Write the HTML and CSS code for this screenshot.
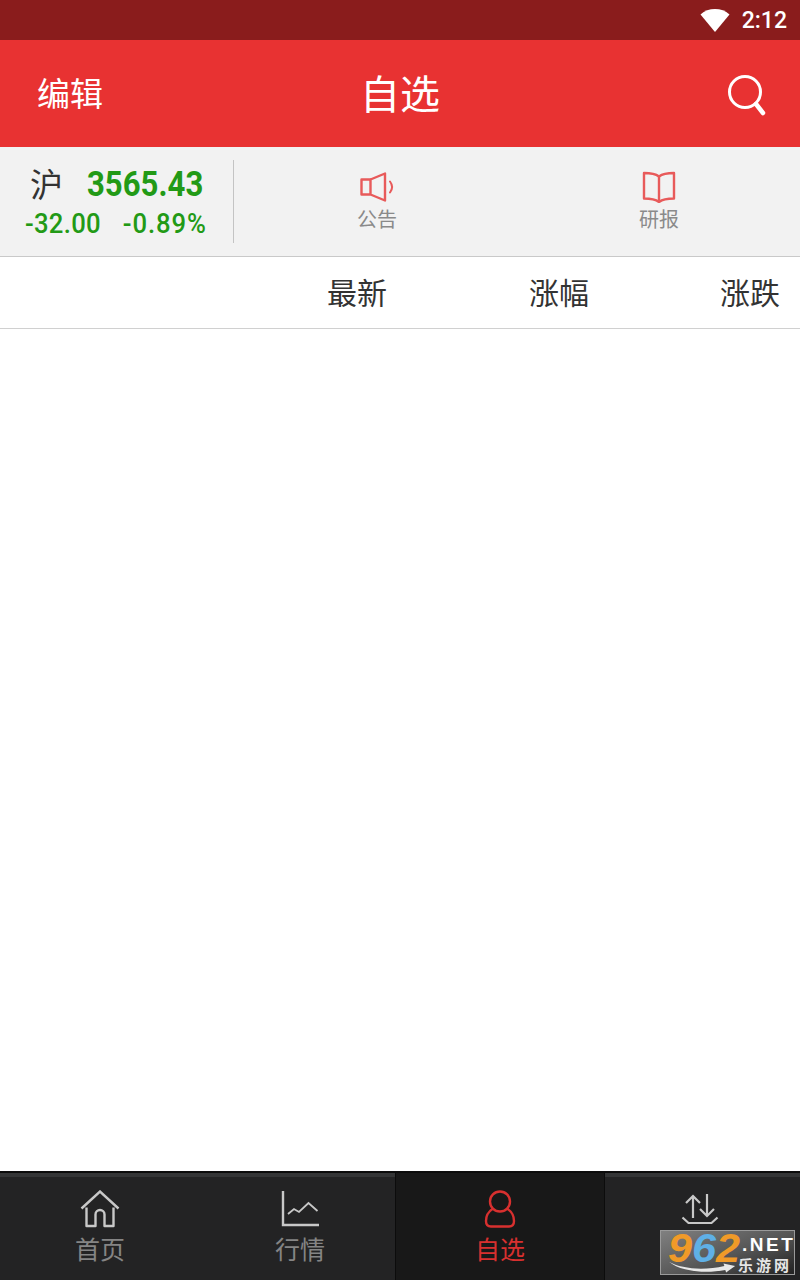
FILE: index.html
```html
<!DOCTYPE html>
<html lang="zh">
<head>
    <title>自选</title>
    <meta charset="UTF-8">
    <link rel="stylesheet" href="styles.css">
</head>
<body>
    <div class="app">
        <div class="statusbar">
            <svg class="wifi" width="30" height="24" viewBox="0 0 30 24"><path d="M0.5 6.5C4.500 2.800 9.500 1 15 1s10.500 1.800 14.500 5.500L15 24z" fill="#fff"/></svg>
            <span class="clock">2:12</span>
        </div>
        <div class="header">
            <span class="edit">编辑</span>
            <span class="title">自选</span>
            <svg class="search" width="42" height="42" viewBox="0 0 42 42" fill="none" stroke="#fff" stroke-linecap="round"><circle cx="19" cy="18" r="15.500" stroke-width="3"/><path d="M30 30l7 9" stroke-width="4.500"/></svg>
        </div>
        <div class="subbar">
            <div class="index">
                <div class="index-top"><span class="market">沪</span><span class="price">3565.43</span></div>
                <div class="index-bottom"><span>-32.00</span><span class="index-pct">-0.89%</span></div>
            </div>
            <div class="shortcuts">
                <div class="shortcut">
                    <svg width="36" height="30" viewBox="0 0 36 30" fill="none" stroke="#e85a5a" stroke-width="2.400" stroke-linejoin="round" stroke-linecap="round"><path d="M2.500 7.500h9v15h-9zM11.500 7.500L26 1.500v27L11.500 22.500"/><path d="M31 9.500c2.600 3.400 2.600 7.600 0 11" stroke-width="2"/></svg>
                    <span>公告</span>
                </div>
                <div class="shortcut">
                    <svg width="34" height="32" viewBox="0 0 34 32" fill="none" stroke="#e85a5a" stroke-width="2.400" stroke-linejoin="round"><path d="M2 2c6 0 11 .5 15 3.500C21 2.500 26 2 32 2v25.500c-6 0-11 .5-15 3.500-4-3-9-3.500-15-3.500z"/><path d="M17 5.500V31"/></svg>
                    <span>研报</span>
                </div>
            </div>
        </div>
        <div class="tablehead">
            <span class="col col-new">最新</span>
            <span class="col col-pct">涨幅</span>
            <span class="col col-chg">涨跌</span>
        </div>
        <div class="list"></div>
        <div class="tabbar">
            <div class="tab">
                <svg width="40" height="38" viewBox="0 0 40 38" fill="none" stroke="#c8c8c8" stroke-width="2.400"><path d="M1.500 18.500L20 1.500l18.500 17"/><path d="M6.500 17.500V36h9V24.500a4.500 4.500 0 0 1 9 0V36h9V17.500" stroke-linejoin="round"/></svg>
                <span>首页</span>
            </div>
            <div class="tab">
                <svg width="38" height="36" viewBox="0 0 38 36" fill="none" stroke="#c8c8c8" stroke-width="2.400"><path d="M2 0v34h36"/><path d="M7 23l6-5 5 3 9.500-9 9 8" stroke-width="1.800"/></svg>
                <span>行情</span>
            </div>
            <div class="tab tab-active">
                <svg width="32" height="38" viewBox="0 0 32 38" fill="none" stroke="#d8302f" stroke-width="2.400"><circle cx="16" cy="11.500" r="10"/><path d="M9 18.500C4 22 2 25 2 31c0 4 1.500 5.500 5 5.500h18c3.500 0 5-1.500 5-5.500 0-6-2-9-7-12.500"/></svg>
                <span>自选</span>
            </div>
            <div class="tab tab-last">
                <svg width="38" height="32" viewBox="0 0 38 32" fill="none" stroke="#c8c8c8" stroke-width="2.200"><path d="M12 25V3M5 10l7-7 7 7M26 1v22M19 16l7 7 7-7"/><path d="M1.500 24.500l6 5.500h23l6-5.500"/></svg>
            </div>
        </div>
        <div class="watermark">
            <svg class="wm-swoosh" width="68" height="13" viewBox="0 0 76 16" preserveAspectRatio="none"><path d="M1 1c14 9 40 11 62 5l-1-3 13 3-10 8-1-3C42 16 14 13 1 1z" fill="#e8e8e8"/></svg>
            <span class="wm-num"><span class="wm-o">9</span><span class="wm-b">6</span><span class="wm-o">2</span></span>
            <span class="wm-right"><span class="wm-net">.NET</span><span class="wm-cn">乐游网</span></span>
        </div>
    </div>
</body>
</html>
```
FILE: styles.css
```css
* {
    box-sizing: border-box;
}
html, body {
    margin: 0;
    height: 100%;
}
body {
    font-family: "Noto Sans CJK SC", "Roboto", sans-serif;
    background: #fff;
}
.app {
    position: relative;
    display: flex;
    flex-direction: column;
    width: 800px;
    height: 1280px;
    overflow: hidden;
}
.statusbar {
    height: 40px;
    background: #8a1c1c;
    display: flex;
    align-items: center;
    justify-content: flex-end;
    padding-right: 13px;
    color: #fff;
}
.wifi {
    margin-right: 12px;
    margin-top: -1px;
}
.clock {
    font-family: "Roboto", sans-serif;
    font-size: 23px;
    font-weight: 500;
}
.header {
    height: 107px;
    background: #e83232;
    color: #fff;
    display: flex;
    align-items: center;
    justify-content: space-between;
    padding: 0 32px 4px 37px;
    position: relative;
}
.edit {
    font-size: 33px;
}
.title {
    font-size: 40px;
    position: absolute;
    left: 360px;
}
.search {
    margin-top: 6px;
}
.subbar {
    height: 110px;
    background: #f2f2f2;
    border-bottom: 1px solid #c9c9c9;
    display: flex;
    align-items: center;
}
.index {
    width: 235px;
    height: 83px;
    border-right: 1px solid #c4c4c4;
    color: #229a16;
    padding-left: 25px;
}
.index-top {
    display: flex;
    align-items: center;
    height: 46px;
}
.market {
    font-size: 33px;
    color: #333;
    width: 62px;
    padding-left: 5px;
}
.price {
    display: inline-block;
    font-family: "Roboto", sans-serif;
    font-size: 35px;
    font-weight: 700;
    transform: scaleX(.89);
    transform-origin: left center;
    margin-top: 2px;
}
.index-bottom {
    display: flex;
    gap: 23px;
    font-family: "Roboto", sans-serif;
    font-size: 27px;
    font-weight: 500;
    letter-spacing: .3px;
    line-height: 34px;
    margin-top: 1px;
    transform: scaleX(.95);
    transform-origin: left center;
}
.index-pct {
    letter-spacing: 1px;
}
.shortcuts {
    flex: 1;
    display: flex;
    padding-left: 2px;
}
.shortcut {
    width: 282px;
    display: flex;
    flex-direction: column;
    align-items: center;
    color: #8a8a8a;
    font-size: 20px;
    line-height: 28px;
}
.shortcut svg {
    height: 32px;
}
.shortcut span {
    margin-top: 2px;
}
.tablehead {
    height: 72px;
    border-bottom: 1px solid #d0d0d0;
    display: flex;
    align-items: center;
    justify-content: flex-end;
    padding: 0 20px 4px 0;
    font-size: 30px;
    color: #333;
}
.col-pct {
    margin-left: 142px;
}
.col-chg {
    margin-left: 131px;
}
.list {
    flex: 1;
    background: #fff;
}
.tabbar {
    height: 109px;
    background: #232324;
    border-top: 2px solid #0c0c0c;
    box-shadow: inset 0 4px 0 #343536;
    display: flex;
}
.tab {
    width: 200px;
    padding-top: 17px;
    display: flex;
    flex-direction: column;
    align-items: center;
    color: #858585;
    font-size: 25px;
    line-height: 36px;
}
.tab svg {
    height: 38px;
    margin-bottom: 2px;
}
.tab-active {
    width: 210px;
    margin-left: -5px;
    background: #181818;
    border-left: 1px solid #0c0c0c;
    border-right: 1px solid #0c0c0c;
    color: #d8302f;
}
.tab-last {
    flex: 1;
    padding-right: 5px;
}
.watermark {
    position: absolute;
    left: 660px;
    top: 1230px;
    width: 135px;
    height: 45px;
    background: linear-gradient(160deg, #808080, #555 55%, #222);
    border: 1px solid #9a9a9a;
    display: flex;
    padding-left: 7px;
}
.wm-swoosh {
    position: absolute;
    left: 7px;
    top: 30px;
}
.wm-num {
    display: inline-block;
    width: 71px;
    font-family: "Liberation Sans", sans-serif;
    font-size: 40px;
    font-weight: 700;
    font-style: italic;
    line-height: 34px;
    transform: scaleX(1.08);
    transform-origin: left top;
    white-space: nowrap;
}
.wm-o {
    color: #f09a28;
}
.wm-b {
    color: #5fb0e6;
}
.wm-right {
    position: absolute;
    left: 77px;
    top: 4px;
    display: flex;
    flex-direction: column;
    color: #fff;
    font-weight: 700;
}
.wm-net {
    font-family: "Liberation Sans", sans-serif;
    font-size: 19px;
    letter-spacing: 2.500px;
    line-height: 20px;
    margin-left: 4px;
}
.wm-cn {
    font-size: 15px;
    line-height: 19px;
    letter-spacing: 3px;
    color: #e6e6e6;
}
```
